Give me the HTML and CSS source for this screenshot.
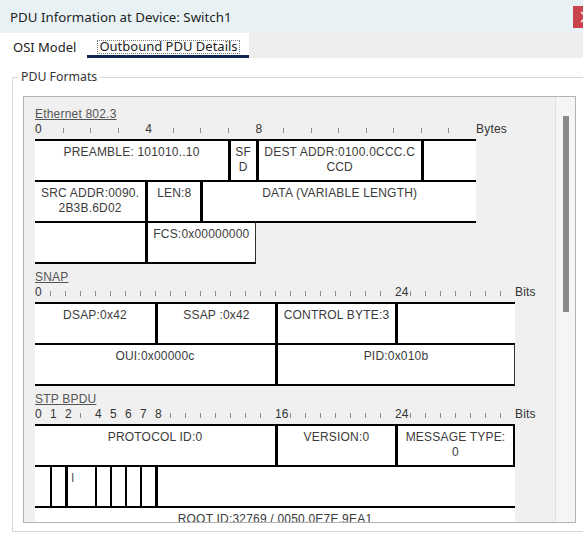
FILE: index.html
```html
<!DOCTYPE html>
<html lang="en">
<head>
<meta charset="utf-8">
<title>PDU Information at Device: Switch1</title>
<link rel="stylesheet" href="styles.css">
</head>
<body>
<div class="window">
  <header class="titlebar">
    <span class="title">PDU Information at Device: Switch1</span>
    <span class="close"><svg width="28" height="22" viewBox="0 0 28 22"><path d="M8 6 L18 16 M18 6 L8 16" stroke="#fff" stroke-width="1.4"/></svg></span>
  </header>
  <nav class="tabs">
    <div class="tab">OSI Model</div>
    <div class="tab active"><span class="focus">Outbound PDU Details</span></div>
    <div class="tab-fill"></div>
  </nav>
  <main class="body">
    <fieldset class="group">
      <legend>PDU Formats</legend>
      <div class="panel">
        <div class="content">

          <section class="proto">
            <div class="ptitle">Ethernet 802.3</div>
            <div class="ruler">
              <div class="scale bytes">
                <span>0</span><span><i></i></span><span><i></i></span><span><i></i></span>
                <span>4</span><span><i></i></span><span><i></i></span><span><i></i></span>
                <span>8</span><span><i></i></span><span><i></i></span><span><i></i></span>
                <span><i></i></span><span><i></i></span><span><i></i></span><span><i></i></span>
              </div>
              <span class="unit">Bytes</span>
            </div>
            <div class="row bytes">
              <div class="c s7">PREAMBLE: 101010..10</div>
              <div class="c s1 l3">SF<br>D</div>
              <div class="c s6 l3">DEST ADDR:0100.0CCC.C<br>CCD</div>
              <div class="c s2 l3"></div>
            </div>
            <div class="row bytes">
              <div class="c s4">SRC ADDR:0090.<br>2B3B.6D02</div>
              <div class="c s2 l3">LEN:8</div>
              <div class="c s10 l3">DATA (VARIABLE LENGTH)</div>
            </div>
            <div class="row bytes">
              <div class="c s4"></div>
              <div class="c s4 l3 r1">FCS:0x00000000</div>
            </div>
          </section>

          <section class="proto">
            <div class="ptitle">SNAP</div>
            <div class="ruler">
              <div class="scale bits">
                <span>0</span><span><i></i></span><span><i></i></span><span><i></i></span>
                <span><i></i></span><span><i></i></span><span><i></i></span><span><i></i></span>
                <span><i></i></span><span><i></i></span><span><i></i></span><span><i></i></span>
                <span><i></i></span><span><i></i></span><span><i></i></span><span><i></i></span>
                <span><i></i></span><span><i></i></span><span><i></i></span><span><i></i></span>
                <span><i></i></span><span><i></i></span><span><i></i></span><span><i></i></span>
                <span>24</span><span><i></i></span><span><i></i></span><span><i></i></span>
                <span><i></i></span><span><i></i></span><span><i></i></span><span><i></i></span>
              </div>
              <span class="unit">Bits</span>
            </div>
            <div class="row bits">
              <div class="c s8">DSAP:0x42</div>
              <div class="c s8 l3">SSAP :0x42</div>
              <div class="c s8 l3">CONTROL BYTE:3</div>
              <div class="c s8 l3"></div>
            </div>
            <div class="row bits">
              <div class="c s16">OUI:0x00000c</div>
              <div class="c s16 l3 r1">PID:0x010b</div>
            </div>
          </section>

          <section class="proto">
            <div class="ptitle">STP BPDU</div>
            <div class="ruler">
              <div class="scale bits">
                <span>0</span><span>1</span><span>2</span><span><i></i></span>
                <span>4</span><span>5</span><span>6</span><span>7</span>
                <span>8</span><span><i></i></span><span><i></i></span><span><i></i></span>
                <span><i></i></span><span><i></i></span><span><i></i></span><span><i></i></span>
                <span>16</span><span><i></i></span><span><i></i></span><span><i></i></span>
                <span><i></i></span><span><i></i></span><span><i></i></span><span><i></i></span>
                <span>24</span><span><i></i></span><span><i></i></span><span><i></i></span>
                <span><i></i></span><span><i></i></span><span><i></i></span><span><i></i></span>
              </div>
              <span class="unit">Bits</span>
            </div>
            <div class="row bits">
              <div class="c s16">PROTOCOL ID:0</div>
              <div class="c s8 l3">VERSION:0</div>
              <div class="c s8 l3 r2">MESSAGE TYPE:<br>0</div>
            </div>
            <div class="row bits">
              <div class="c s1"></div>
              <div class="c s1 l2"></div>
              <div class="c s2 l3 left">I</div>
              <div class="c s1 l2"></div>
              <div class="c s1 l2"></div>
              <div class="c s1 l2"></div>
              <div class="c s1 l2"></div>
              <div class="c s24 l3"></div>
            </div>
            <div class="row bits">
              <div class="c s32">ROOT ID:32769 / 0050.0E7E.9EA1</div>
            </div>
          </section>

        </div>
        <div class="scrollbar"><div class="thumb"></div></div>
      </div>
    </fieldset>
  </main>
</div>
</body>
</html>
```
FILE: styles.css
```css
* { box-sizing: border-box; }

html, body {
  margin: 0;
  padding: 0;
  background: #ffffff;
}

body {
  width: 583px;
  height: 538px;
  overflow: hidden;
  font-family: "Noto Sans", "Open Sans", sans-serif;
  color: #222;
}

.window {
  width: 583px;
  height: 538px;
  overflow: hidden;
  display: flex;
  flex-direction: column;
}

/* title bar */
.titlebar {
  height: 33px;
  flex: none;
  background: #e8f2f5;
  display: flex;
  align-items: center;
  padding-left: 10px;
  overflow: hidden;
}

.title {
  font-size: 13.3px;
  color: #1e1e1e;
  white-space: nowrap;
}

.close {
  margin-left: auto;
  margin-right: -18px;
  width: 28px;
  height: 22px;
  background: #c8434b;
  display: block;
  flex: none;
}

.close svg { display: block; }

/* tabs */
.tabs {
  height: 25px;
  flex: none;
  display: flex;
}

.tab {
  padding: 5px 11px 0;
  height: 25px;
  display: flex;
  align-items: center;
  font-size: 13px;
  color: #222;
  background: #ffffff;
  border-bottom: 3px solid transparent;
  white-space: nowrap;
}

.tab:first-child { margin-left: 2px; }

.tab.active {
  border-bottom-color: #0c2752;
  padding: 5px 9px 0 10px;
}

.focus {
  display: inline-block;
  line-height: 11px;
  border: 1px dotted #7a7a7a;
  padding: 0 1px 1px;
}

.tab-fill {
  flex: 1;
  background: #eeeeee;
}

/* body */
.body {
  flex: 1;
  padding-top: 11px;
  background: #fff;
}

.group {
  margin: 0 -20px 0 12px;
  padding: 11px 0 8px 10px;
  border: 1px solid #d6d6d6;
  min-width: 0;
}

.group legend {
  font-size: 12.3px;
  line-height: 16px;
  color: #333;
  padding: 0 3px;
  margin-left: -5px;
}

.panel {
  width: 553px;
  height: 427px;
  border: 1px solid #b3b3b3;
  background: #f0f0f0;
  display: flex;
  overflow: hidden;
}

.content {
  flex: 1;
  padding: 10px 0 0 11px;
  font-family: "Liberation Sans", Arial, sans-serif;
  font-size: 12px;
  letter-spacing: 0.2px;
  line-height: 15px;
  overflow: hidden;
}

.scrollbar {
  width: 20px;
  flex: none;
  background: #f5f5f5;
  border-left: 1px solid #e2e2e2;
}

.thumb {
  margin: 19px 0 0 7px;
  width: 6px;
  height: 196px;
  background: #8a8a8a;
}

/* protocol blocks */
.proto + .proto { margin-top: 6px; }

.ptitle {
  height: 15px;
  color: #555;
  text-decoration: underline;
}

.ruler {
  height: 15px;
  margin-bottom: 2px;
  display: flex;
  color: #333;
}

.scale { display: grid; }
.scale span { white-space: nowrap; }

.scale i {
  display: inline-block;
  width: 1px;
  height: 5px;
  background: #8f8f8f;
  vertical-align: baseline;
}

.bytes { grid-template-columns: repeat(16, 27.5625px); }
.bits { grid-template-columns: repeat(32, 15px); }

.row {
  display: grid;
  height: 43px;
}

.row + .row { margin-top: -2px; }

.c {
  height: 43px;
  background: #ffffff;
  border-top: 2px solid #000;
  border-bottom: 2px solid #000;
  padding-top: 4px;
  text-align: center;
  color: #3b3b3b;
  white-space: nowrap;
  overflow: hidden;
}

.c.l3 { border-left: 3px solid #000; }
.c.l2 { border-left: 2px solid #000; }
.c.r1 { border-right: 1px solid #333; }
.c.r2 { border-right: 2px solid #000; }
.c.left { text-align: left; padding-left: 3px; color: #555; }

.s1 { grid-column: span 1; }
.s2 { grid-column: span 2; }
.s4 { grid-column: span 4; }
.s6 { grid-column: span 6; }
.s7 { grid-column: span 7; }
.s8 { grid-column: span 8; }
.s10 { grid-column: span 10; }
.s16 { grid-column: span 16; }
.s24 { grid-column: span 24; }
.s32 { grid-column: span 32; }
```
